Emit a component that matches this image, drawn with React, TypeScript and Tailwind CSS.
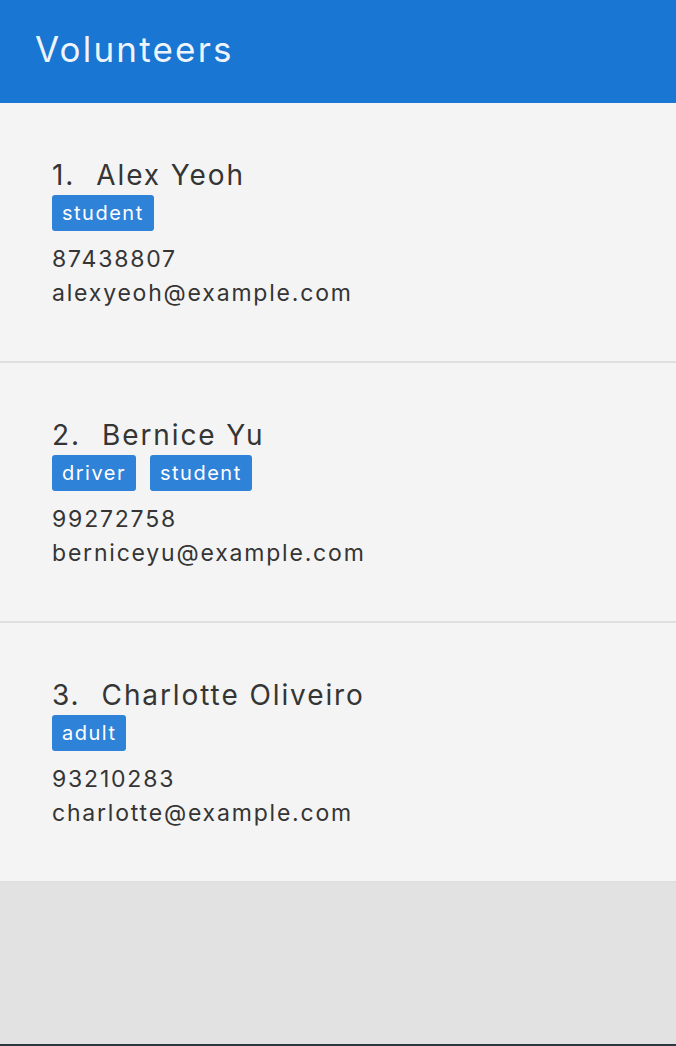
const volunteers = [
  { name: "Alex Yeoh", tags: ["student"], phone: "87438807", email: "alexyeoh@example.com" },
  { name: "Bernice Yu", tags: ["driver", "student"], phone: "99272758", email: "berniceyu@example.com" },
  { name: "Charlotte Oliveiro", tags: ["adult"], phone: "93210283", email: "charlotte@example.com" },
];

function VolunteerCard({ index, name, tags, phone, email }: { index: number; name: string; tags: string[]; phone: string; email: string }) {
  return (
    <div className="h-[260px] bg-[#f4f4f4] border-b-2 border-[#dfdfdf] pl-[52px] pt-[54px]">
      <div className="flex text-[28px] leading-[36px] tracking-[1.9px] text-[#353535]">
        <span className="mr-[21px]">{index}.</span>
        <span>{name}</span>
      </div>
      <div className="flex gap-[14px] mt-[2px]">
        {tags.map((t) => (
          <span key={t} className="h-[36px] px-[10px] rounded-[3px] bg-[#2e82d8] text-white text-[20px] leading-[36px] tracking-[1.5px]">
            {t}
          </span>
        ))}
      </div>
      <div className="mt-[11px] text-[23px] leading-[34px] tracking-[1.8px] text-[#353535]">
        <div>{phone}</div>
        <div>{email}</div>
      </div>
    </div>
  );
}

export default function App() {
  return (
    <div className="w-[676px] h-[1046px] flex flex-col bg-[#e2e2e2] font-['Inter',sans-serif]">
      <div className="h-[103px] bg-[#1976d2] pl-[35px] pt-[25px] text-[35px] leading-[48px] tracking-[2.2px] text-[#eef4fb]">
        Volunteers
      </div>
      {volunteers.map((v, i) => (
        <VolunteerCard key={v.name} index={i + 1} {...v} />
      ))}
      <div className="flex-1" />
      <div className="h-[2px] bg-[#2d3741]" />
    </div>
  );
}
